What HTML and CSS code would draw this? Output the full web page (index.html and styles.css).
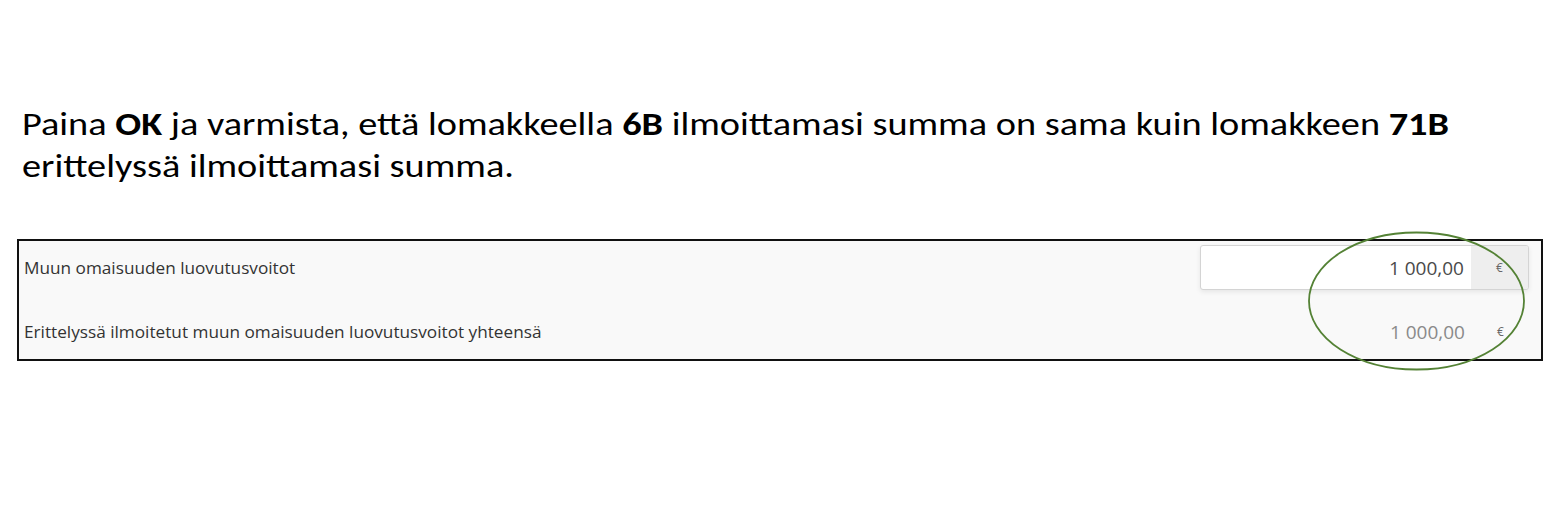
FILE: index.html
```html
<!DOCTYPE html>
<html lang="fi">
<head>
<meta charset="utf-8">
<title>Luovutusvoitot</title>
<link rel="stylesheet" href="styles.css">
</head>
<body>
<div class="page">
  <p class="intro">Paina <b>OK</b> ja varmista, että lomakkeella <b>6B</b> ilmoittamasi summa on sama kuin lomakkeen <b>71B</b><br>erittelyssä ilmoittamasi summa.</p>
  <div class="panel">
    <div class="row">
      <span class="label">Muun omaisuuden luovutusvoitot</span>
      <div class="field field-input">
        <span class="value">1 000,00</span>
        <span class="unit">€</span>
      </div>
    </div>
    <div class="row">
      <span class="label">Erittelyssä ilmoitetut muun omaisuuden luovutusvoitot yhteensä</span>
      <div class="field field-static">
        <span class="value">1 000,00</span>
        <span class="unit">€</span>
      </div>
    </div>
  </div>
  <svg class="highlight" width="220" height="142" viewBox="0 0 220 142" aria-hidden="true">
    <ellipse cx="109.5" cy="70" rx="107.5" ry="68.5" fill="none" stroke="#548235" stroke-width="1.8"/>
  </svg>
</div>
</body>
</html>
```

FILE: styles.css
```css
html, body {
  margin: 0;
  padding: 0;
  background: #ffffff;
}

.page {
  position: relative;
  width: 1552px;
  height: 514px;
  overflow: hidden;
}

.intro {
  margin: 0;
  padding: 104px 0 0 22px;
  font-family: Calibri, Carlito, "Open Sans", sans-serif;
  font-size: 32px;
  line-height: 42px;
  color: #000000;
  transform: scaleX(1.197);
  transform-origin: 22px 0;
  white-space: nowrap;
}

.intro b {
  font-weight: 700;
}

.panel {
  box-sizing: border-box;
  margin: 51px 0 0 17px;
  width: 1526px;
  border: 2px solid #111111;
  background: #f9f9f9;
  padding: 4px 12px 5px 5px;
  display: flex;
  flex-direction: column;
  gap: 19px;
  font-family: "Open Sans", "Noto Sans", sans-serif;
}

.row {
  display: flex;
  justify-content: space-between;
  align-items: center;
  height: 45px;
}

.label {
  font-size: 17.2px;
  color: #333333;
}

.field {
  display: flex;
  width: 329px;
  height: 45px;
  box-sizing: border-box;
}

.field-input {
  border: 1px solid #d4d4d4;
  border-radius: 3px;
  box-shadow: 0 2px 5px rgba(0, 0, 0, 0.08);
  background: #ffffff;
  overflow: hidden;
}

.value {
  flex: 1;
  display: flex;
  align-items: center;
  justify-content: flex-end;
  padding-right: 7px;
  font-size: 19px;
  color: #4a4a4a;
}

.field-static .value {
  color: #8a8a8a;
}

.unit {
  width: 57px;
  display: flex;
  align-items: center;
  justify-content: center;
  font-size: 12px;
  color: #666666;
}

.field-input .unit {
  background: #eeeeee;
}

.highlight {
  position: absolute;
  left: 1307px;
  top: 231px;
}
```
